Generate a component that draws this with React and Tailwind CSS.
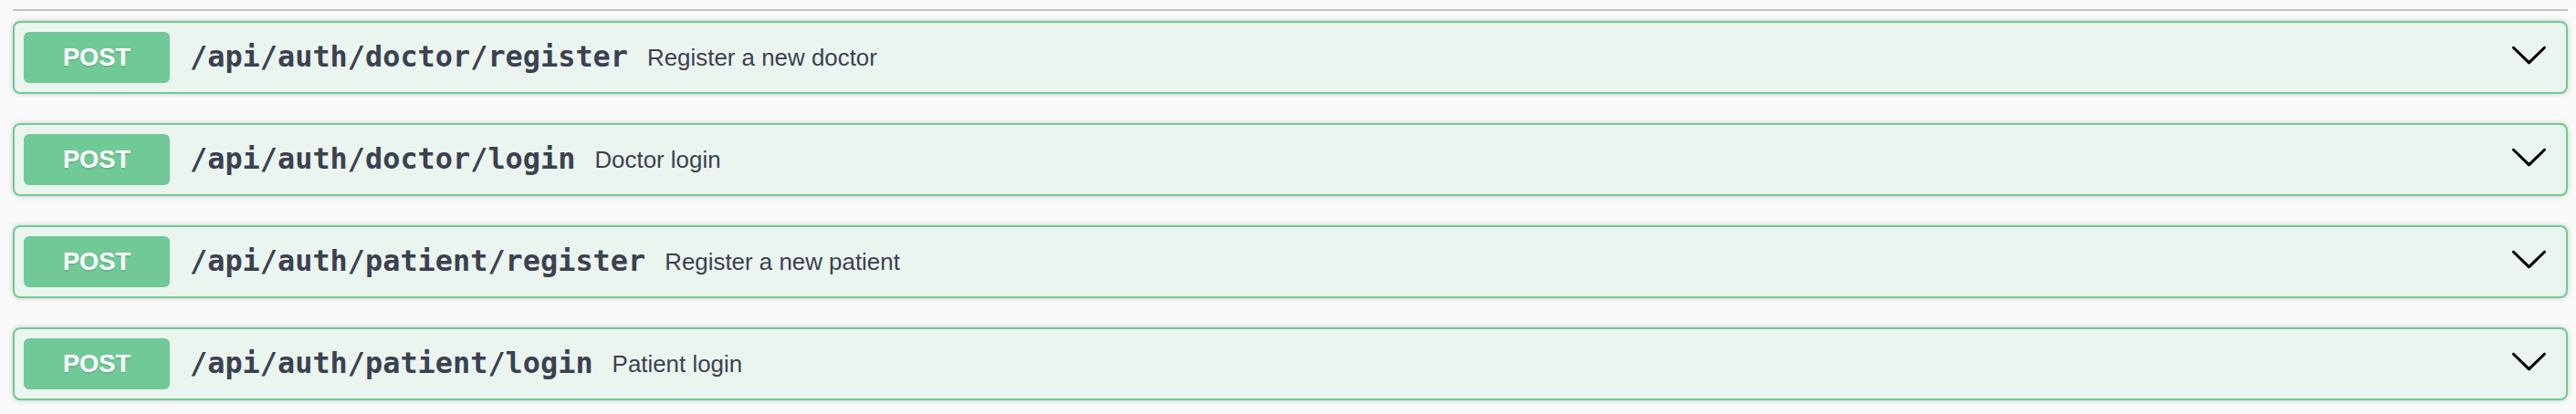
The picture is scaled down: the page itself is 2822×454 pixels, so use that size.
const endpoints = [
	{ method: "POST", path: "/api/auth/doctor/register", summary: "Register a new doctor" },
	{ method: "POST", path: "/api/auth/doctor/login", summary: "Doctor login" },
	{ method: "POST", path: "/api/auth/patient/register", summary: "Register a new patient" },
	{ method: "POST", path: "/api/auth/patient/login", summary: "Patient login" },
];

function ArrowDown() {
	return (
		<svg width="43" height="43" viewBox="0 0 20 20" fill="#000" className="shrink-0 mb-[8px]">
			<path d="M17.418 6.109c.272-.268.709-.268.979 0s.271.701 0 .969l-7.908 7.83c-.27.268-.707.268-.979 0l-7.908-7.83c-.27-.268-.27-.701 0-.969.271-.268.709-.268.979 0L10 13.25l7.418-7.141z" />
		</svg>
	);
}

function Opblock({ method, path, summary }) {
	return (
		<div className="rounded-[8px] border-2 border-[#6fca96] bg-[#ebf5ef] shadow-[0_0_6px_rgba(0,0,0,0.19)]">
			<div className="flex items-center pl-[10px] pr-[19px] py-[10px]">
				<div className="w-[160px] h-[56px] shrink-0 rounded-[6px] bg-[#70c996] flex items-center justify-center text-white font-bold text-[27.2px] font-['Liberation_Sans',Arial,sans-serif] [text-shadow:0_2px_0_rgba(0,0,0,0.1)]">
					{method}
				</div>
				<span className="ml-[22px] text-[31.9px] font-bold text-[#3b4151] font-['DejaVu_Sans_Mono',monospace] whitespace-nowrap">
					{path}
				</span>
				<span className="ml-[21px] text-[25.9px] text-[#3b4151] font-['Liberation_Sans',Arial,sans-serif] whitespace-nowrap">
					{summary}
				</span>
				<div className="flex-1" />
				<ArrowDown />
			</div>
		</div>
	);
}

export default function App() {
	return (
		<div className="min-h-[454px] bg-[#fafafa] pt-[10px] pl-[14px] pr-[9px]">
			<div className="h-[2px] bg-[#c2c2c6]" />
			<div className="mt-[11px] flex flex-col gap-[32px]">
				{endpoints.map((e) => (
					<Opblock key={e.path} {...e} />
				))}
			</div>
		</div>
	);
}
